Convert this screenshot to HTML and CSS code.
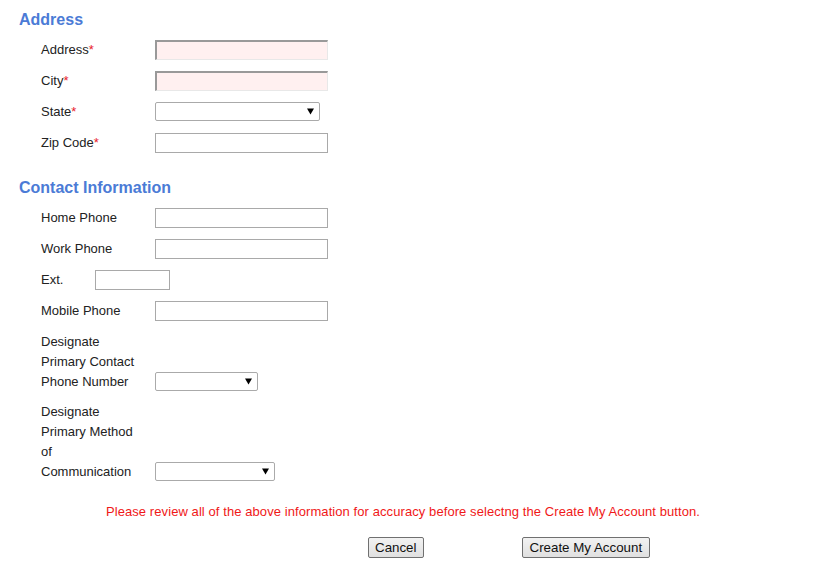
FILE: index.html
```html
<!DOCTYPE html>
<html lang="en">
<head>
    <meta charset="UTF-8">
    <title>Create Account</title>
    <link rel="stylesheet" href="styles.css">
</head>
<body>

<div class="page">
    <section class="group">
        <h2 class="groupTitle">Address</h2>
        <div class="fields">
            <label class="fieldLabel">Address<span class="req">*</span></label>
            <input class="textInput required wide" type="text">

            <label class="fieldLabel">City<span class="req">*</span></label>
            <input class="textInput required wide" type="text">

            <label class="fieldLabel">State<span class="req">*</span></label>
            <select class="selectBox state"><option></option></select>

            <label class="fieldLabel">Zip Code<span class="req">*</span></label>
            <input class="textInput wide" type="text">
        </div>
    </section>

    <section class="group">
        <h2 class="groupTitle">Contact Information</h2>
        <div class="fields">
            <label class="fieldLabel">Home Phone</label>
            <input class="textInput wide" type="text">

            <label class="fieldLabel">Work Phone</label>
            <input class="textInput wide" type="text">

            <div class="extRow">
                <label class="fieldLabel extLabel">Ext.</label>
                <input class="textInput ext" type="text">
            </div>

            <label class="fieldLabel">Mobile Phone</label>
            <input class="textInput wide" type="text">

            <label class="fieldLabel">Designate Primary Contact Phone Number</label>
            <select class="selectBox phonePick"><option></option></select>

            <label class="fieldLabel tight">Designate Primary Method of Communication</label>
            <select class="selectBox methodPick tight"><option></option></select>
        </div>
    </section>

    <p class="notice">Please review all of the above information for accuracy before selectng the Create My Account button.</p>

    <div class="actions">
        <button class="btn" type="button">Cancel</button>
        <button class="btn" type="button">Create My Account</button>
    </div>
</div>

</body>
</html>
```

FILE: styles.css
```css
/* Base */
body {
    margin: 8px;
    font-family: 'Liberation Sans', Arial, sans-serif;
    font-size: 13px;
    color: #222;
    background: #fff;
}

.page {
    width: 790px;
}

/* Section headings */
.group + .group {
    margin-top: 25px;
}

.groupTitle {
    margin: 2px 0 10px 11px;
    font-size: 16px;
    line-height: 20px;
    font-weight: bold;
    color: #4b7bd6;
}

/* Label / control grid */
.fields {
    display: grid;
    grid-template-columns: 114px auto;
    justify-content: start;
    justify-items: start;
    align-items: end;
    row-gap: 11px;
    padding-left: 33px;
}

.fieldLabel {
    max-width: 100px;
    line-height: 20px;
}

.fields .tight {
    margin-top: -1px;
}

.req {
    color: #e8202a;
}

.extRow {
    grid-column: 1 / -1;
    display: flex;
    align-items: center;
}

.extLabel {
    width: 54px;
}

/* Inputs */
.textInput {
    box-sizing: border-box;
    height: 20px;
    margin: 0;
    padding: 1px 3px;
    border: 1px solid #a9a9a9;
    background: #fff;
    font: inherit;
}

.textInput.wide {
    width: 173px;
}

.textInput.ext {
    width: 75px;
}

.textInput.required {
    border-width: 2px 1px 1px 2px;
    border-style: solid;
    border-color: #999 #e8e8e8 #e8e8e8 #999;
    background: #fff0f0;
}

.selectBox {
    appearance: none;
    -webkit-appearance: none;
    box-sizing: border-box;
    height: 19px;
    margin: 0 0 1px 0;
    padding: 0 20px 0 3px;
    border: 1px solid #aaa;
    border-radius: 2px;
    background: #fff url("data:image/svg+xml,%3Csvg xmlns='http://www.w3.org/2000/svg' width='7' height='7'%3E%3Cpath d='M0 0.5h7L3.5 6.5z' fill='%23000'/%3E%3C/svg%3E") no-repeat right 5px center;
    font: inherit;
}

.selectBox.state {
    width: 165px;
}

.selectBox.phonePick {
    width: 103px;
}

.selectBox.methodPick {
    width: 120px;
}

/* Footer */
.notice {
    margin: 20px 0 0;
    line-height: 20px;
    text-align: center;
    letter-spacing: 0.08px;
    color: #f01818;
}

.actions {
    display: flex;
    gap: 98px;
    margin-top: 15px;
    padding-left: 360px;
}

.btn {
    height: 21px;
    margin: 0;
    padding: 0 6px;
    border: 1px solid #707070;
    border-radius: 2px;
    background: linear-gradient(#f2f2f2, #e0e0e0);
    font: inherit;
    font-size: 13.333px;
    color: #111;
    line-height: 19px;
}

.btn + .btn {
    padding: 0 7px;
}
```
